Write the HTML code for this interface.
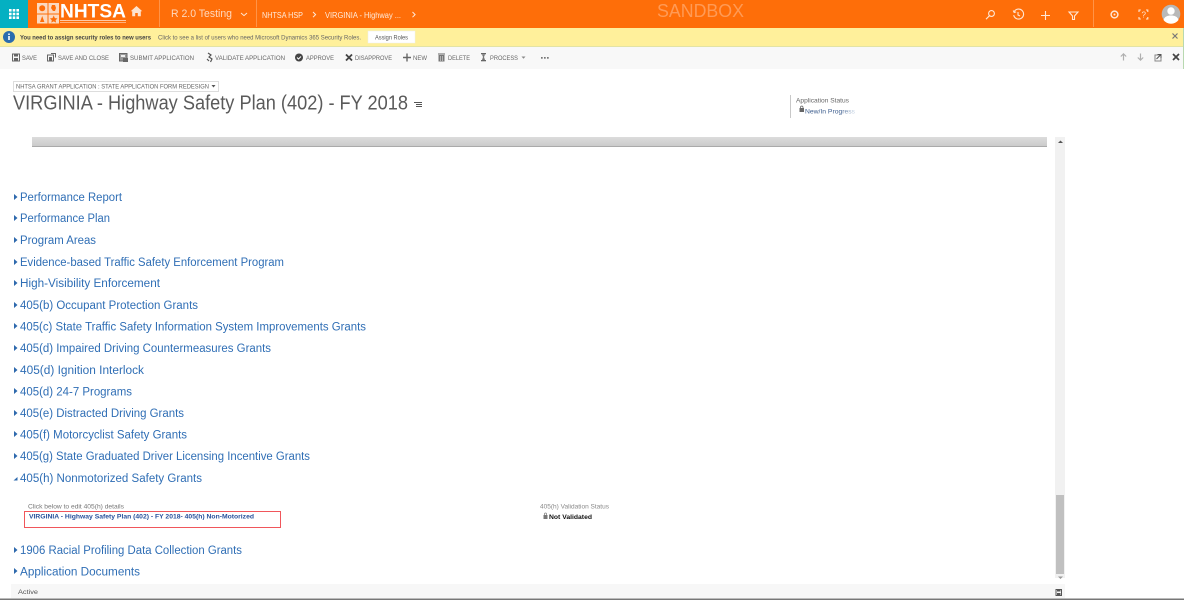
<!DOCTYPE html>
<html lang="en">
<head>
<meta charset="utf-8">
<title>VIRGINIA - Highway Safety Plan (402) - FY 2018</title>
<style>
html,body{margin:0;padding:0;width:1184px;height:600px;overflow:hidden;background:#fff}
svg{display:block;filter:blur(.35px)}
text{font-family:"Liberation Sans",sans-serif}
.l{font-size:11.5px;fill:#2f6eb5}
.c{font-size:6.6px;fill:#666}
.a{fill:#2e69ad}
</style>
</head>
<body>
<svg width="1184" height="600" viewBox="0 0 1184 600" xmlns="http://www.w3.org/2000/svg">
<defs><linearGradient id="g" x1="0" y1="0" x2="0" y2="1"><stop offset="0" stop-color="#dcdcdc"/><stop offset="1" stop-color="#cbcbcb"/></linearGradient>
<linearGradient id="f" x1="0" y1="0" x2="1" y2="0"><stop offset="0" stop-color="#3f5f8f"/><stop offset=".7" stop-color="#3f5f8f"/><stop offset="1" stop-color="#d8e4f0"/></linearGradient></defs>

<!-- top bar -->
<rect width="1184" height="28" fill="#fe6e09"/>
<rect width="28" height="28" fill="#04b0c2"/>
<g fill="#fff"><rect x="9" y="9" width="2.6" height="2.6"/><rect x="12.7" y="9" width="2.6" height="2.6"/><rect x="16.4" y="9" width="2.6" height="2.6"/><rect x="9" y="12.7" width="2.6" height="2.6"/><rect x="12.7" y="12.7" width="2.6" height="2.6"/><rect x="16.4" y="12.7" width="2.6" height="2.6"/><rect x="9" y="16.4" width="2.6" height="2.6"/><rect x="12.7" y="16.4" width="2.6" height="2.6"/><rect x="16.4" y="16.4" width="2.6" height="2.6"/></g>
<!-- logo -->
<g fill="#fbd9c0"><rect x="37" y="3" width="10.5" height="10.5"/><rect x="48.5" y="3" width="10.5" height="10.5"/><rect x="37" y="14.5" width="10.5" height="9"/><rect x="48.5" y="14.5" width="10.5" height="9"/></g>
<g fill="#fe6e09"><circle cx="42.2" cy="8.2" r="3"/><path d="M52 5h3l1 3-1 3h-2l-2-3zM40 22l2.200-6 2.200 6zM53.700 15.500l1.200 2.600 2.600.3-1.900 1.800.5 2.400-2.400-1.200-2.400 1.200.5-2.400-1.900-1.800 2.600-.3z"/></g>
<text x="60" y="17.500" font-size="19" font-weight="700" fill="#fff" textLength="66" lengthAdjust="spacingAndGlyphs">NHTSA</text>
<rect x="60" y="20" width="66" height="1" fill="#ffc9a3"/><rect x="60" y="22" width="66" height="1" fill="#ffb07a"/>
<path d="M136.500 6l5.800 5.200h-1.500v5h-3v-3.200h-2.600v3.200h-3v-5h-1.500z" fill="#fde3cf"/>
<rect x="159" y="0" width="1" height="27" fill="#ff9447"/><rect x="256" y="0" width="1" height="27" fill="#ff9447"/>
<text x="171" y="17" font-size="11" fill="#ffd9bf" textLength="61" lengthAdjust="spacingAndGlyphs">R 2.0 Testing</text>
<path d="M241 13l3 2.600 3-2.600" fill="none" stroke="#ffe6d4" stroke-width="1"/>
<text x="262" y="18" font-size="8" fill="#ffeadb" textLength="41" lengthAdjust="spacingAndGlyphs">NHTSA HSP</text>
<path d="M313 12l2.600 2.600-2.600 2.600" fill="none" stroke="#ffeadb" stroke-width="1"/>
<text x="325" y="18" font-size="8" fill="#ffeadb" textLength="76" lengthAdjust="spacingAndGlyphs">VIRGINIA - Highway ...</text>
<path d="M412.500 12l2.600 2.600-2.600 2.600" fill="none" stroke="#ffeadb" stroke-width="1"/>
<text x="657" y="17" font-size="18" fill="#ff9a55" textLength="87" lengthAdjust="spacingAndGlyphs">SANDBOX</text>
<!-- right icons -->
<g fill="none" stroke="#ffe6d4" stroke-width="1.100">
<circle cx="991.500" cy="13.500" r="2.900"/><path d="M989.500 15.700l-3.500 3.500"/>
<path d="M1014.300 11.500a5 5 0 1 1-.6 3.600M1013.200 10.500l1 2 2-.6M1018 12v3l2 1"/>
<path d="M1045.500 11v9M1041 15.500h9"/>
<path d="M1069 12h9l-3.500 4v3.500h-2V16z"/>
<circle cx="1114.500" cy="14.500" r="3.400" stroke-width="1.500"/>
<path d="M1139 12v-2h1.800M1146 10h1.800v2M1139 17v2h1.800M1146 19h1.800v-2"/>
</g>
<circle cx="1114.500" cy="14.500" r="1" fill="#ffe6d4"/>
<text x="1141.500" y="17.500" font-size="8" fill="#ffe6d4">?</text>
<rect x="1093" y="0" width="1" height="27" fill="#ff9447"/>
<circle cx="1171" cy="14" r="9.300" fill="#b9b9b9"/>
<circle cx="1171" cy="11" r="3.700" fill="#fff"/>
<path d="M1163.500 20c1-3.500 4-4.500 7.500-4.500s6.500 1 7.500 4.500a9.300 9.300 0 0 1-15 0z" fill="#fff"/>

<!-- notification bar -->
<rect y="28" width="1184" height="18" fill="#fff09b"/>
<rect y="46" width="1184" height="1" fill="#e3e3a5"/>
<circle cx="9" cy="37" r="6" fill="#2b6cae"/>
<rect x="8.200" y="36" width="1.600" height="4" fill="#fff"/><rect x="8.200" y="33.500" width="1.600" height="1.500" fill="#fff"/>
<text x="20" y="39.500" font-size="6.300" font-weight="700" fill="#444" textLength="131" lengthAdjust="spacingAndGlyphs">You need to assign security roles to new users</text>
<text x="158" y="39.500" font-size="6.300" fill="#666" textLength="203" lengthAdjust="spacingAndGlyphs">Click to see a list of users who need Microsoft Dynamics 365 Security Roles.</text>
<rect x="368" y="31" width="47" height="12" fill="#fff" stroke="#eee" stroke-width=".5"/>
<text x="375" y="39.500" font-size="6.300" fill="#555" textLength="33" lengthAdjust="spacingAndGlyphs">Assign Roles</text>
<path d="M1172.500 33.500l5 5M1177.500 33.500l-5 5" stroke="#777" stroke-width="1.200"/>

<!-- command bar -->
<rect y="47" width="1184" height="22" fill="#f8f8f8"/>
<text class="c" x="22" y="60" textLength="15" lengthAdjust="spacingAndGlyphs">SAVE</text>
<text class="c" x="58" y="60" textLength="51" lengthAdjust="spacingAndGlyphs">SAVE AND CLOSE</text>
<text class="c" x="130" y="60" textLength="64" lengthAdjust="spacingAndGlyphs">SUBMIT APPLICATION</text>
<text class="c" x="215" y="60" textLength="70" lengthAdjust="spacingAndGlyphs">VALIDATE APPLICATION</text>
<text class="c" x="306" y="60" textLength="28" lengthAdjust="spacingAndGlyphs">APPROVE</text>
<text class="c" x="355" y="60" textLength="37" lengthAdjust="spacingAndGlyphs">DISAPPROVE</text>
<text class="c" x="413" y="60" textLength="14" lengthAdjust="spacingAndGlyphs">NEW</text>
<text class="c" x="448" y="60" textLength="22" lengthAdjust="spacingAndGlyphs">DELETE</text>
<text class="c" x="490" y="60" textLength="28" lengthAdjust="spacingAndGlyphs">PROCESS</text>
<!-- save -->
<path d="M12.500 54h7v7h-7z" fill="none" stroke="#666" stroke-width="1"/><rect x="14" y="54" width="4" height="2.500" fill="#666"/><rect x="14" y="58" width="4" height="3" fill="#666"/>
<!-- save close -->
<path d="M47.500 55h6v6h-6z" fill="none" stroke="#666"/><rect x="49" y="57" width="3" height="3.500" fill="#666"/><path d="M51 53.500h4.500v4" fill="none" stroke="#666"/>
<!-- submit -->
<rect x="119.500" y="53.500" width="7.500" height="7.500" fill="#999" stroke="#666"/><rect x="121" y="55" width="4" height="2" fill="#eee"/><rect x="123" y="58" width="5" height="4" fill="#666"/>
<!-- validate -->
<path d="M208 53l3 2-2 2 3 2-1.500 3M207 59l2 2" fill="none" stroke="#555" stroke-width="1.200"/>
<!-- approve -->
<circle cx="299" cy="57.500" r="4" fill="#444"/><path d="M297 57.500l1.500 1.500 2.500-2.500" fill="none" stroke="#fff"/>
<!-- disapprove -->
<path d="M346 54.500l6 6M352 54.500l-6 6" stroke="#444" stroke-width="1.800"/>
<!-- new -->
<path d="M407 53.500v8M403 57.500h8" stroke="#666" stroke-width="1.400"/>
<!-- delete -->
<rect x="438.500" y="55" width="6" height="6.500" fill="#777"/><rect x="438" y="53.500" width="7" height="1" fill="#666"/><path d="M440.500 56v5M442.500 56v5" stroke="#ddd" stroke-width=".6"/>
<!-- process -->
<rect x="481" y="53" width="5" height="1.300" fill="#666"/><rect x="481" y="60" width="5" height="1.300" fill="#666"/><path d="M482 54.500h3l-1 2.500 1 3h-3l1-3z" fill="#777"/>
<path d="M521.500 56.500h4l-2 2.300z" fill="#888"/>
<g fill="#777"><rect x="541" y="57" width="1.700" height="1.700"/><rect x="544" y="57" width="1.700" height="1.700"/><rect x="547" y="57" width="1.700" height="1.700"/></g>
<path d="M1123.500 60.500v-6.500M1120.800 56.500l2.700-2.700 2.700 2.700M1140.500 53.500v6.500M1137.800 57.500l2.700 2.700 2.700-2.700" fill="none" stroke="#b0b0b0" stroke-width="1.200"/>
<rect x="1155" y="55" width="6" height="6" fill="none" stroke="#888"/><path d="M1156.500 59l4-4M1157.500 54.500h3.500v3.500" fill="none" stroke="#555"/>
<path d="M1173 54l6 6M1179 54l-6 6" stroke="#444" stroke-width="1.700"/>

<!-- form header -->
<rect x="13.500" y="81.500" width="205" height="10" fill="#fff" stroke="#ddd"/>
<text x="16" y="88.500" font-size="6" fill="#666" textLength="193" lengthAdjust="spacingAndGlyphs">NHTSA GRANT APPLICATION : STATE APPLICATION FORM REDESIGN</text>
<path d="M211.500 85h4l-2 2.500z" fill="#555"/>
<text x="13" y="109.500" font-size="20" fill="#5a5a5a" textLength="395" lengthAdjust="spacingAndGlyphs">VIRGINIA - Highway Safety Plan (402) - FY 2018</text>
<path d="M414 102.500h8M416 104.500h6M416 106.500h6" stroke="#555" stroke-width=".9"/>
<rect x="790" y="95" width="1" height="23" fill="#c8c8c8"/>
<text x="796" y="102.500" font-size="6.500" fill="#666" textLength="53" lengthAdjust="spacingAndGlyphs">Application Status</text>
<rect x="799.500" y="108" width="4.500" height="4" fill="#666"/><path d="M800.500 108v-1a1.300 1.300 0 0 1 2.500 0v1" fill="none" stroke="#666" stroke-width=".8"/>
<text x="805" y="113.500" font-size="6.500" fill="url(#f)" textLength="50" lengthAdjust="spacingAndGlyphs">New/In Progress</text>

<!-- section bar -->
<rect x="32" y="137" width="1015" height="9" fill="url(#g)"/>
<rect x="32" y="146" width="1015" height="1" fill="#aaa"/>

<!-- scrollbar -->
<rect x="1055" y="137" width="10" height="441" fill="#f1f1f1"/>
<rect x="1056" y="495" width="8" height="79" fill="#c0c0c0"/>
<path d="M1058 143l2.500-2.500 2.500 2.500z" fill="#555"/>
<path d="M1058 576.500l2.500 2.500 2.500-2.500z" fill="#999"/>

<!-- accordion -->
<path class="a" d="M14 194l3.500 3-3.500 3zM14 215l3.500 3-3.500 3zM14 237l3.500 3-3.500 3zM14 259l3.500 3-3.500 3zM14 280l3.500 3-3.500 3zM14 302l3.500 3-3.500 3zM14 323l3.500 3-3.500 3zM14 345l3.500 3-3.500 3zM14 367l3.500 3-3.500 3zM14 388l3.500 3-3.500 3zM14 410l3.500 3-3.500 3zM14 431l3.500 3-3.500 3zM14 453l3.500 3-3.500 3zM13.500 480.500l4-3.500v3.500zM14 547l3.500 3-3.500 3zM14 568l3.500 3-3.500 3z"/>
<text class="l" x="20" y="201" textLength="102" lengthAdjust="spacingAndGlyphs">Performance Report</text>
<text class="l" x="20" y="222" textLength="90" lengthAdjust="spacingAndGlyphs">Performance Plan</text>
<text class="l" x="20" y="244" textLength="76" lengthAdjust="spacingAndGlyphs">Program Areas</text>
<text class="l" x="20" y="266" textLength="264" lengthAdjust="spacingAndGlyphs">Evidence-based Traffic Safety Enforcement Program</text>
<text class="l" x="20" y="287" textLength="140" lengthAdjust="spacingAndGlyphs">High-Visibility Enforcement</text>
<text class="l" x="20" y="309" textLength="178" lengthAdjust="spacingAndGlyphs">405(b) Occupant Protection Grants</text>
<text class="l" x="20" y="330.500" textLength="346" lengthAdjust="spacingAndGlyphs">405(c) State Traffic Safety Information System Improvements Grants</text>
<text class="l" x="20" y="352" textLength="251" lengthAdjust="spacingAndGlyphs">405(d) Impaired Driving Countermeasures Grants</text>
<text class="l" x="20" y="374" textLength="124" lengthAdjust="spacingAndGlyphs">405(d) Ignition Interlock</text>
<text class="l" x="20" y="395.500" textLength="112" lengthAdjust="spacingAndGlyphs">405(d) 24-7 Programs</text>
<text class="l" x="20" y="417" textLength="164" lengthAdjust="spacingAndGlyphs">405(e) Distracted Driving Grants</text>
<text class="l" x="20" y="438.500" textLength="167" lengthAdjust="spacingAndGlyphs">405(f) Motorcyclist Safety Grants</text>
<text class="l" x="20" y="460" textLength="290" lengthAdjust="spacingAndGlyphs">405(g) State Graduated Driver Licensing Incentive Grants</text>
<text class="l" x="20" y="482" textLength="182" lengthAdjust="spacingAndGlyphs">405(h) Nonmotorized Safety Grants</text>
<text class="l" x="20" y="554" textLength="222" lengthAdjust="spacingAndGlyphs">1906 Racial Profiling Data Collection Grants</text>
<text class="l" x="20" y="575.500" textLength="120" lengthAdjust="spacingAndGlyphs">Application Documents</text>

<!-- expanded -->
<text x="28" y="508.500" font-size="6.500" fill="#777" textLength="96" lengthAdjust="spacingAndGlyphs">Click below to edit 405(h) details</text>
<rect x="24.500" y="511.500" width="256" height="16" fill="#fff" stroke="#f0565b"/>
<text x="29" y="518.500" font-size="6.200" font-weight="700" fill="#27509b" textLength="225" lengthAdjust="spacingAndGlyphs">VIRGINIA - Highway Safety Plan (402) - FY 2018- 405(h) Non-Motorized</text>
<text x="540" y="508.500" font-size="6.500" fill="#888" textLength="69" lengthAdjust="spacingAndGlyphs">405(h) Validation Status</text>
<rect x="543.500" y="515" width="4" height="4" fill="#777"/><path d="M544.500 515v-1a1 1 0 0 1 2 0v1" fill="none" stroke="#777" stroke-width=".7"/>
<text x="549" y="518.800" font-size="6.500" font-weight="700" fill="#111" textLength="43" lengthAdjust="spacingAndGlyphs">Not Validated</text>

<!-- status bar -->
<rect x="11" y="584" width="1054" height="14" fill="#f7f7f7"/>
<text x="18" y="594" font-size="6.800" fill="#555" textLength="20" lengthAdjust="spacingAndGlyphs">Active</text>
<rect x="1056" y="589.500" width="5.500" height="6" fill="none" stroke="#555"/><rect x="1057" y="589.500" width="3.500" height="2" fill="#555"/><rect x="1057" y="593" width="3.500" height="2.500" fill="#555"/>
<rect x="0" y="598.500" width="1184" height="1.500" fill="#777"/>
<rect x="1183" y="28" width="1" height="41" fill="#b8d8b0"/>
</svg>
</body>
</html>
